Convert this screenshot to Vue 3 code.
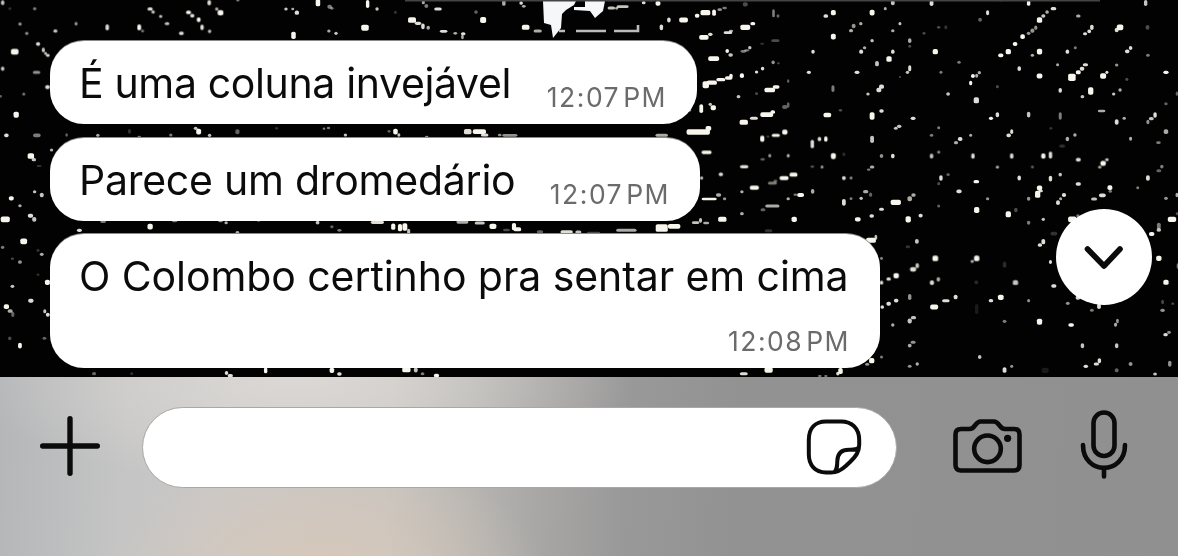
<script setup>
const messages = [
  { text: 'É uma coluna invejável', time: '12:07', cls: 'first' },
  { text: 'Parece um dromedário', time: '12:07', cls: 'second' },
  { text: 'O Colombo certinho pra sentar em cima', time: '12:08', cls: 'tall' },
]

// Each speck: centre x, centre y, width, height, opacity. Grouped in four wallpaper tiles.
const parse = (s) => s.trim().split(';').filter(Boolean).map((p) => {
  const [x, y, w = 9, h = 11, o = 0.85] = p.trim().split(/\s+/).map(Number)
  return { x: x - w / 2, y: y - h / 2, w, h, o }
})

const tiles = [
  {
    x: 0, y: 0, specks: parse(`
7 8 9 14 .8;26 26 8 8 .2;92 26 9 10 .5;53 72 9 10 .6;71 100 9 9 .6;147 93 11 10 .8;202 71 8 11 .6;101 132 11 11 .9;115 150 8 14 .8;121 160 8 9 .8;127 166 10 9 .9;39 155 20 17 1;7 206 9 13 .8;97 217 20 9 .6;126 261 12 12 .9;63 282 8 9 .5;43 344 14 18 1;2 289 6 8 .4;17 406 12 11 .9;98 406 20 11 .5;177 405 7 10 .4;137 450 9 9 .7;82 468 17 17 1;90 479 12 10 .8;104 498 14 6 .2;
285 82 9 18 .9;370 82 10 18 1;379 93 8 8 .5;399 27 14 10 .9;407 36 9 10 .8;427 49 9 9 .8;444 71 12 9 .8;482 100 13 10 .9;501 37 13 11 1;511 47 11 11 .9;528 59 10 14 1;537 82 9 16 .9;557 94 9 10 .8;556 8 9 16 .9;576 27 9 10 .7;586 38 15 16 1;632 1 9 6 .6;
760 27 9 9 .8;778 27 8 8 .7;789 38 11 13 .9;845 8 12 22 1;876 20 12 12 .5;882 25 9 8 .5;780 106 12 22 1;874 93 9 9 .7;893 100 9 10 .8;970 83 20 18 1;977 12 9 24 1;1002 27 9 10 .8;1051 37 8 10 .2;1125 7 8 12 .7;1133 18 10 12 .5;1164 27 20 9 .9;1095 60 21 17 1;1111 70 17 10 .9;1124 79 9 17 .9;1138 83 9 12 .7;1179 94 20 8 .9;1210 100 10 8 .7;1231 101 12 9 .9;1229 111 7 13 .7;1265 36 9 11 .4;1284 60 16 18 1;1339 8 9 19 .7;1385 9 9 11 .9;1392 19 10 8 .7;1397 82 20 15 1;1429 93 22 9 .7;
260 406 9 9 .7;344 394 8 14 .2;370 410 9 5 .5;454 405 9 9 .5;520 385 10 10 .8;528 395 13 17 1;557 406 9 10 .8;631 395 11 15 .4;735 385 8 8 .2;861 386 7 7 .5;873 384 9 8 .5;918 405 9 9 .8;1034 394 8 8 .4;1051 395 12 17 1;1060 405 8 10 .8;1134 410 9 5 .6;1243 395 20 16 .9;1274 395 35 14 1;1288 405 20 9 .9;1328 405 10 8 .6;1355 406 40 8 .6`),
  },
  {
    x: 588, y: 0, specks: parse(`
148 8 10 10 .9;168 1 10 6 .8;186 10 13 14 1;62 24 20 9 .8;92 20 32 8 .8;76 25 8 8 .7;215 60 9 15 .9;254 60 23 15 1;195 82 9 17 .9;290 47 12 12 1;312 38 26 16 1;335 38 10 19 1;350 29 12 8 .6;363 24 12 8 .5;418 13 13 13 .3;493 40 7 24 .5;505 48 8 10 .4;308 112 25 14 1;325 103 12 10 .9;372 98 23 8 .9;380 93 11 8 .7;418 82 26 16 1;438 71 13 10 1;463 131 11 6 .2;498 122 22 8 .3;370 153 9 12 1;379 165 12 10 .8;334 176 29 14 1;413 154 15 8 .5;422 151 14 7 .5;430 143 9 10 .8;492 187 9 11 .6;506 190 7 7 .3;464 206 9 11 .9;448 216 9 9 .9;409 227 11 14 1;313 254 17 21 1;329 248 27 13 1;353 239 24 10 1;374 234 20 10 1;380 228 9 13 1;400 290 10 10 .8;448 281 8 8 .3;483 270 28 14 1;500 261 18 10 1;532 243 6 11 .4;301 326 10 26 1;325 313 9 10 .8;333 323 14 15 1;270 331 8 8 .6;414 367 22 15 1;441 355 21 9 .9;475 344 34 14 1;491 336 12 11 1;523 321 14 12 .4;532 315 7 16 .4;
293 396 62 16 1;320 385 15 14 1;196 406 33 9 .7;315 457 27 10 1;463 416 11 19 1;478 410 8 6 .3;499 406 22 9 1;523 396 14 15 1;483 467 8 11 .6;464 478 12 8 .4;532 467 8 11 .7;415 500 22 10 .9;353 523 12 10 .9;302 534 8 10 .8;521 534 24 12 1;546 524 21 12 1;490 549 24 9 .5;498 543 10 8 .4;442 563 24 13 1;596 432 9 25 .9;615 417 9 13 .9;632 417 9 16 1;652 468 13 18 1;680 463 8 10 .2;596 500 10 7 .4;622 501 8 10 .6;680 534 10 12 .9;699 534 8 8 .6;755 501 12 9 .7;746 509 10 7 .5;780 468 9 12 .6;810 468 9 14 .9;
652 38 13 16 1;632 48 12 11 .9;652 110 13 17 1;598 155 9 12 .9;587 217 11 10 .9;651 266 8 20 .5;636 345 20 14 1;671 331 9 8 .3;755 38 13 17 1;790 26 8 10 .7;810 8 10 15 .8;829 71 8 10 .8;725 71 9 10 .7;706 78 10 13 .6;699 92 11 10 .7;810 92 9 9 .7;755 122 9 10 .8;735 143 9 9 .7;726 155 10 13 .9;810 155 9 13 .9;800 177 14 17 1;768 191 10 16 .8;715 217 13 10 .9;855 122 9 14 .7;855 139 8 8 .3;855 205 8 18 .9;849 217 9 10 .8;829 231 6 6 .3;780 260 13 13 .9;773 270 13 13 .9;744 282 9 9 .8;780 333 12 10 .9;755 348 13 22 1;864 355 13 10 .9;827 379 12 10 .8;818 385 10 9 .8;755 418 10 22 .8;932 383 8 9 .5;913 406 9 9 .5;893 100 8 8 .3;
932 82 9 8 .3;951 82 8 12 .2;913 9 10 18 .9;1062 38 8 15 .9;1042 59 10 12 .4;1097 1 9 6 .5;923 155 14 16 1;986 187 9 9 .5;938 217 8 9 .5;957 282 10 10 .8;1040 218 9 10 .7;1033 227 8 12 .7;1023 228 10 12 1;1017 249 8 14 1;1032 301 14 18 .9;1171 9 9 17 1;1237 26 15 10 .9;1220 36 9 11 .7;1210 48 11 10 .8;1200 60 14 17 1;1190 83 8 13 .6;1181 92 10 13 .6;1171 100 10 10 .6;1155 110 12 14 1;1135 132 12 12 1;1117 155 14 16 1;1097 166 14 11 1;1200 155 14 17 1;1181 166 9 9 .7;1146 206 9 14 .9;1200 228 15 15 1;1088 260 8 10 .3;1088 344 9 15 .9;1071 355 11 10 1;1171 344 9 17 .8;1126 395 8 14 .9;1118 406 12 11 .9;1303 48 12 9 .7;1339 82 9 16 .9;1332 94 10 11 .9;1321 101 11 9 .9;1295 143 8 9 .5;1274 155 9 13 .9;1405 90 10 13 .9;1414 82 17 17 1;1487 82 10 14 .3;1482 9 9 18 .8;1442 144 9 12 .9;1433 154 12 11 .9;1488 166 10 9 .5;1405 195 9 9 .6;1248 194 8 9 .7;1322 194 14 9 .9;1313 206 12 12 .9;1303 217 13 12 1;1286 232 20 22 1;1379 217 8 10 .9;1369 228 16 16 1;1432 238 8 10 .3;1255 271 9 14 .9;1336 273 14 22 1;1314 290 10 10 .8;1414 270 9 10 .7;1397 282 9 9 .8;1536 217 14 10 1;1565 281 6 13 .4;1536 311 9 9 .4;1365 333 20 8 .7;1425 355 9 9 .7;1405 366 10 16 .9;1507 345 9 16 .9;1497 356 13 10 .8;1488 366 8 13 .6;1255 348 8 22 .5;1230 385 8 8 .2;
1017 406 8 9 .7;989 417 12 12 .9;978 428 11 10 .7;932 456 8 9 .6;913 468 9 15 .8;1023 468 9 16 .9;1126 468 9 16 .9;1088 501 9 9 .7;1181 501 8 8 .4;1210 468 11 16 1;1229 465 9 21 .9;1294 405 9 10 .7;1274 417 9 13 .7;1260 438 16 9 .2;1442 416 8 12 .7;1536 395 12 14 .7;1516 428 12 8 .5;1303 479 13 11 .9;1379 479 9 10 .8;1369 490 14 15 1;1360 501 9 9 .7;1525 500 9 11 .5;1517 512 13 9 .4;1488 534 10 16 .9;938 534 9 16 .9;957 524 9 8 .4;1032 545 15 10 1;1146 534 9 15 .9;1229 536 9 17 .9;1255 524 9 11 .8;1303 552 14 10 .9;1200 564 14 15 1;1387 563 13 14 1;1461 563 8 9 .5;932 551 8 10 .3`),
  },
  {
    x: 0, y: 190, specks: parse(`
30 25 13 13 1;53 47 9 9 .7;92 5 9 9 .8;111 15 10 14 .8;14 88 24 17 1;81 77 14 12 .9;91 88 11 14 .8;63 154 18 17 1;7 172 9 10 .5;101 181 8 10 .2;111 193 10 10 .7;33 206 8 7 .3;53 216 10 11 .6;101 254 8 7 .2;126 277 13 16 1;33 289 10 10 .8;82 332 14 12 .9;17 350 14 14 1;27 363 13 11 .7;34 373 8 16 .4;119 364 8 12 .8;127 374 10 12 .9;26 445 9 11 .3;118 445 10 9 .4;53 467 10 17 1;
211 121 13 10 .9;274 95 15 8 .5;399 110 14 17 1;464 94 14 6 .5;586 94 12 6 .6;601 98 9 9 .7;631 127 9 8 .7;687 92 8 6 .5;844 98 10 11 .8;882 110 9 9 .4;902 121 11 8 .5;1003 97 35 10 .9;1045 110 11 19 1;1063 113 11 22 1;1076 111 13 22 1;1086 124 8 15 .8;1229 96 32 10 .7;1275 99 27 9 .8;1310 109 18 16 1;1346 120 18 7 .3;1366 110 11 22 1;1375 118 20 12 1;1435 125 17 9 .4;1506 126 33 10 .9;1537 126 16 9 .8;
250 551 11 10 .4;350 551 8 8 .2;602 549 9 12 .9;612 557 14 10 .9;706 541 9 18 1;882 541 12 16 1;902 552 12 10 .9;1080 539 22 16 1;1105 540 10 15 .8;1123 551 10 9 .5;1160 557 14 11 1`),
  },
  {
    x: 588, y: 190, specks: parse(`
102 121 54 9 .7;196 114 32 23 1;229 109 33 14 1;15 128 35 6 .3;322 27 40 8 1;347 15 14 10 .7;363 26 9 9 .6;409 5 9 9 .7;357 88 22 15 1;286 98 20 8 .8;299 91 8 14 .8;314 99 16 7 .7;409 71 10 10 .7;465 59 13 9 .4;490 48 38 9 .7;480 122 20 9 .2;532 26 9 9 .7;551 14 10 7 .5;565 15 18 12 1;597 4 9 14 .7;548 88 14 16 1;738 5 14 10 .7;751 14 8 13 .4;726 25 9 10 .8;699 26 8 8 .5;680 37 10 20 .9;717 88 15 13 1;754 78 12 10 .9;780 58 13 9 .9;818 37 27 16 1;855 26 12 15 .7;865 15 11 11 .7;851 88 14 19 1;884 77 11 11 .9;932 48 8 9 .4;986 4 14 11 .9;1033 60 14 18 1;1062 26 9 9 .6;1117 73 14 18 1;1137 60 9 13 .3;1171 26 9 12 .6;1195 13 14 21 1;1203 3 12 8 .9;1171 98 9 12 .5;1210 88 9 10 .8;1265 15 11 12 .9;1256 26 8 9 .7;1249 38 10 14 .9;1287 88 22 17 1;1302 77 9 9 .5;1345 27 16 9 .8;1367 16 18 11 .9;1388 4 9 9 .5;1536 25 10 10 .6;1552 88 22 16 1;1565 15 7 13 .7;1566 71 8 10 .3;1517 108 10 20 .5;1517 120 12 10 .8;1498 132 14 12 1;1517 205 14 16 1;1536 277 14 15 1;1567 228 5 16 .5;1527 361 12 10 .6;1527 336 7 13 .3;1554 341 8 7 .3;1358 349 10 16 .9;1339 361 10 9 .5;1275 340 10 10 .6;1302 323 12 12 .9;1229 216 8 12 .9;1238 288 14 10 .9;1210 155 10 16 .9;1201 165 11 11 .9;1238 131 18 11 .2;752 151 26 15 1;765 142 7 15 .8;874 154 10 14 .8;850 170 12 9 .2;780 205 8 10 .5;923 205 15 17 1;1033 205 14 17 1;1021 214 9 9 .7;875 227 9 15 .8;864 238 16 13 .9;819 257 14 16 1;799 267 12 10 .9;780 278 9 12 .9;931 268 9 13 .7;914 278 11 14 .9;1032 277 10 10 .2;1136 278 14 15 .8;1107 224 8 18 .2;855 321 9 18 .6;819 332 12 11 .9;799 341 12 12 .9;782 351 9 11 .9;920 351 21 15 1;951 332 20 9 .9;977 321 10 14 .9;1097 322 15 16 1;1071 332 12 10 .9;1171 332 8 10 .6;1033 357 9 30 .1;865 383 14 10 .8;855 393 11 15 .8;810 405 9 10 .7;1107 394 10 10 .5;1200 395 14 18 1;1284 405 15 10 1;1407 393 7 14 .6;1402 404 8 12 .7;1544 427 10 10 .6;1535 434 12 10 .9;864 457 13 9 .6;855 467 10 11 .7;1314 467 9 15 .8;1405 467 9 15 .8;1041 501 9 12 .8;754 512 14 16 1;742 523 11 9 .6;780 501 8 9 .5;875 522 9 10 .7;855 529 10 9 .6;1126 529 8 10 .6;1107 540 10 17 .9;1215 541 18 16 .1;1359 512 9 15 .9;1351 522 14 9 .9;1323 529 12 10 .9;1442 522 10 12 .6;1405 541 10 12 .4;1546 521 9 18 .6;1507 552 10 9 .8;414 551 21 9 .9;480 540 22 16 1;671 543 12 18 1;664 551 9 11 .9;616 558 10 6 .5;632 558 9 6 .5`),
  },
]
</script>

<template>
  <main class="screen">
    <section class="chat">
      <svg class="wallpaper" width="1178" height="377" viewBox="0 0 1178 377" aria-hidden="true">
        <g class="specks">
          <g v-for="(t, i) in tiles" :key="i" :transform="`translate(${t.x} ${t.y}) scale(.37628 .33333)`">
            <rect v-for="(s, j) in t.specks" :key="j" :x="s.x" :y="s.y" :width="s.w" :height="s.h" rx="5" :opacity="s.o" />
          </g>
        </g>
        <path d="M543 1H576L574 5L566 10L562 14L561 28L553 38L551 25L544 23Z M574 7H585V1H605L603 11L595 18L590 11L574 10Z" fill="#f6f7f8" />
        <path d="M559 31H565M576 31H606M614 31H638V25" fill="none" stroke="#bcbcbc" stroke-width="2.6" />
        <path d="M405 .7H1100" stroke="#444" stroke-width="1.4" />
      </svg>
      <article v-for="m in messages" :key="m.text" class="bubble" :class="m.cls">
        <p class="body">{{ m.text }}</p>
        <time class="time"><span>{{ m.time }}</span><span>PM</span></time>
      </article>
      <button class="jump" aria-label="Scroll down">
        <svg width="96" height="96" viewBox="0 0 96 96"><path d="M31.5 40L48 57L64 40" /></svg>
      </button>
    </section>

    <footer class="composer">
      <svg class="plus" width="60" height="60" viewBox="0 0 60 60"><path d="M30 2.7V57.3M2.7 30H57.3" /></svg>
      <div class="field">
        <svg width="56" height="56" viewBox="0 0 56 56">
          <path d="M20 2.5H35C46 2.5 53.2 9.5 53.2 21V26C53.2 33 50 37 44 43L40 46.8C34.5 52 31 53.4 25 53.4H20C9 53.4 2.8 46 2.8 35V21C2.8 9.5 9 2.5 20 2.5Z M52.5 28.5C50.5 31 48 30.7 43 30.7C35 30.7 31.5 35 31.3 42C31.2 48 31 50.5 28.5 53" />
        </svg>
      </div>
      <svg class="camera" width="70" height="56" viewBox="0 0 70 56">
        <path d="M8 10H16.500C22.500 10 22 2.500 27.500 2.500H41C46.500 2.500 46 10 52 10H61Q66.500 10 66.500 15.500V46Q66.500 51.500 61 51.500H8Q2.500 51.500 2.500 46V15.500Q2.500 10 8 10Z" />
        <circle cx="34.5" cy="29.8" r="13.3" /><circle class="dot" cx="54.6" cy="19.3" r="3.6" />
      </svg>
      <svg class="mic" width="48" height="70" viewBox="0 0 48 70">
        <rect x="13.5" y="2.500" width="21" height="43.500" rx="10.5" />
        <path d="M3 35C3 65.500 45 65.500 45 35M24 58V66.500" />
      </svg>
    </footer>
  </main>
</template>

<style>
body { margin: 0; overflow: hidden; }
</style>

<style scoped>
.screen { width: 1178px; height: 556px; overflow: hidden; font-family: Inter, "Liberation Sans", sans-serif; }
.chat { position: relative; height: 377px; box-sizing: border-box; padding: 41px 0 0 50px; background: #020202; display: flex; flex-direction: column; align-items: flex-start; overflow: hidden; }
.wallpaper { position: absolute; inset: 0; }
.specks { fill: #f8f5ed; filter: blur(.65px); }
.bubble { position: relative; box-sizing: border-box; flex: none; display: flex; justify-content: space-between; height: 83px; padding: 0 30px 0 29px; margin-bottom: 14px; border-radius: 34px; background: #fff; color: #0b0b0b; box-shadow: 0 -1px 0 #8a8a8a; }
.first { width: 647px; }
.second { width: 650px; margin-bottom: 13px; }
.tall { width: 830px; height: 134px; }
.body { margin: 16.5px 0 0; font-size: 41px; line-height: 50px; white-space: nowrap; }
.first .body { letter-spacing: -.36px; }
.second .body { letter-spacing: -.25px; }
.tall .body { letter-spacing: -.08px; }
.time { display: flex; gap: 3px; margin-top: 39.5px; height: 32px; font-size: 26.5px; line-height: 32px; letter-spacing: 1.5px; color: #6b6b6b; white-space: nowrap; }
.tall .time { position: absolute; right: 30px; top: 90.5px; margin: 0; }
.jump { position: absolute; left: 1056px; top: 209px; width: 96px; height: 96px; padding: 0; border: 0; border-radius: 50%; background: #fff; }
svg { display: block; flex: none; }
.jump path { fill: none; stroke: #0b0b0b; stroke-width: 5.6; stroke-linecap: round; stroke-linejoin: round; }
.composer { height: 179px; box-sizing: border-box; padding: 30px 0 0 40px; display: flex; align-items: flex-start;
  background:
    radial-gradient(ellipse 220px 130px at 325px 200px, rgba(216, 200, 184, .95), rgba(212, 200, 188, 0)),
    radial-gradient(ellipse 330px 110px at 300px 0, rgba(225, 222, 218, .75), rgba(225, 222, 218, 0)),
    linear-gradient(93deg, #b5b6b8 0, #bcbdbe 60px, #c5c5c5 130px, #cac8c7 230px, #c8c5c2 390px, #b8b6b3 470px, #a7a6a5 550px, #9a9999 630px, #929292 740px, #909090 100%); }
.composer svg { fill: none; stroke: #0b0b0b; stroke-width: 4.6; stroke-linecap: round; stroke-linejoin: round; }
.composer .plus { margin-top: 9px; stroke-width: 5.4; }
.field { display: flex; justify-content: flex-end; box-sizing: border-box; width: 755px; height: 81px; margin-left: 42px; padding: 11px 34px 0 0; border: 1px solid #aaa8a7; border-radius: 41px; background: #fff; }
.composer .field svg { stroke-width: 4; }
.camera { margin: 12px 0 0 56px; }
.composer .dot { fill: #0b0b0b; stroke: none; }
.mic { margin: 3px 0 0 57px; }
</style>
